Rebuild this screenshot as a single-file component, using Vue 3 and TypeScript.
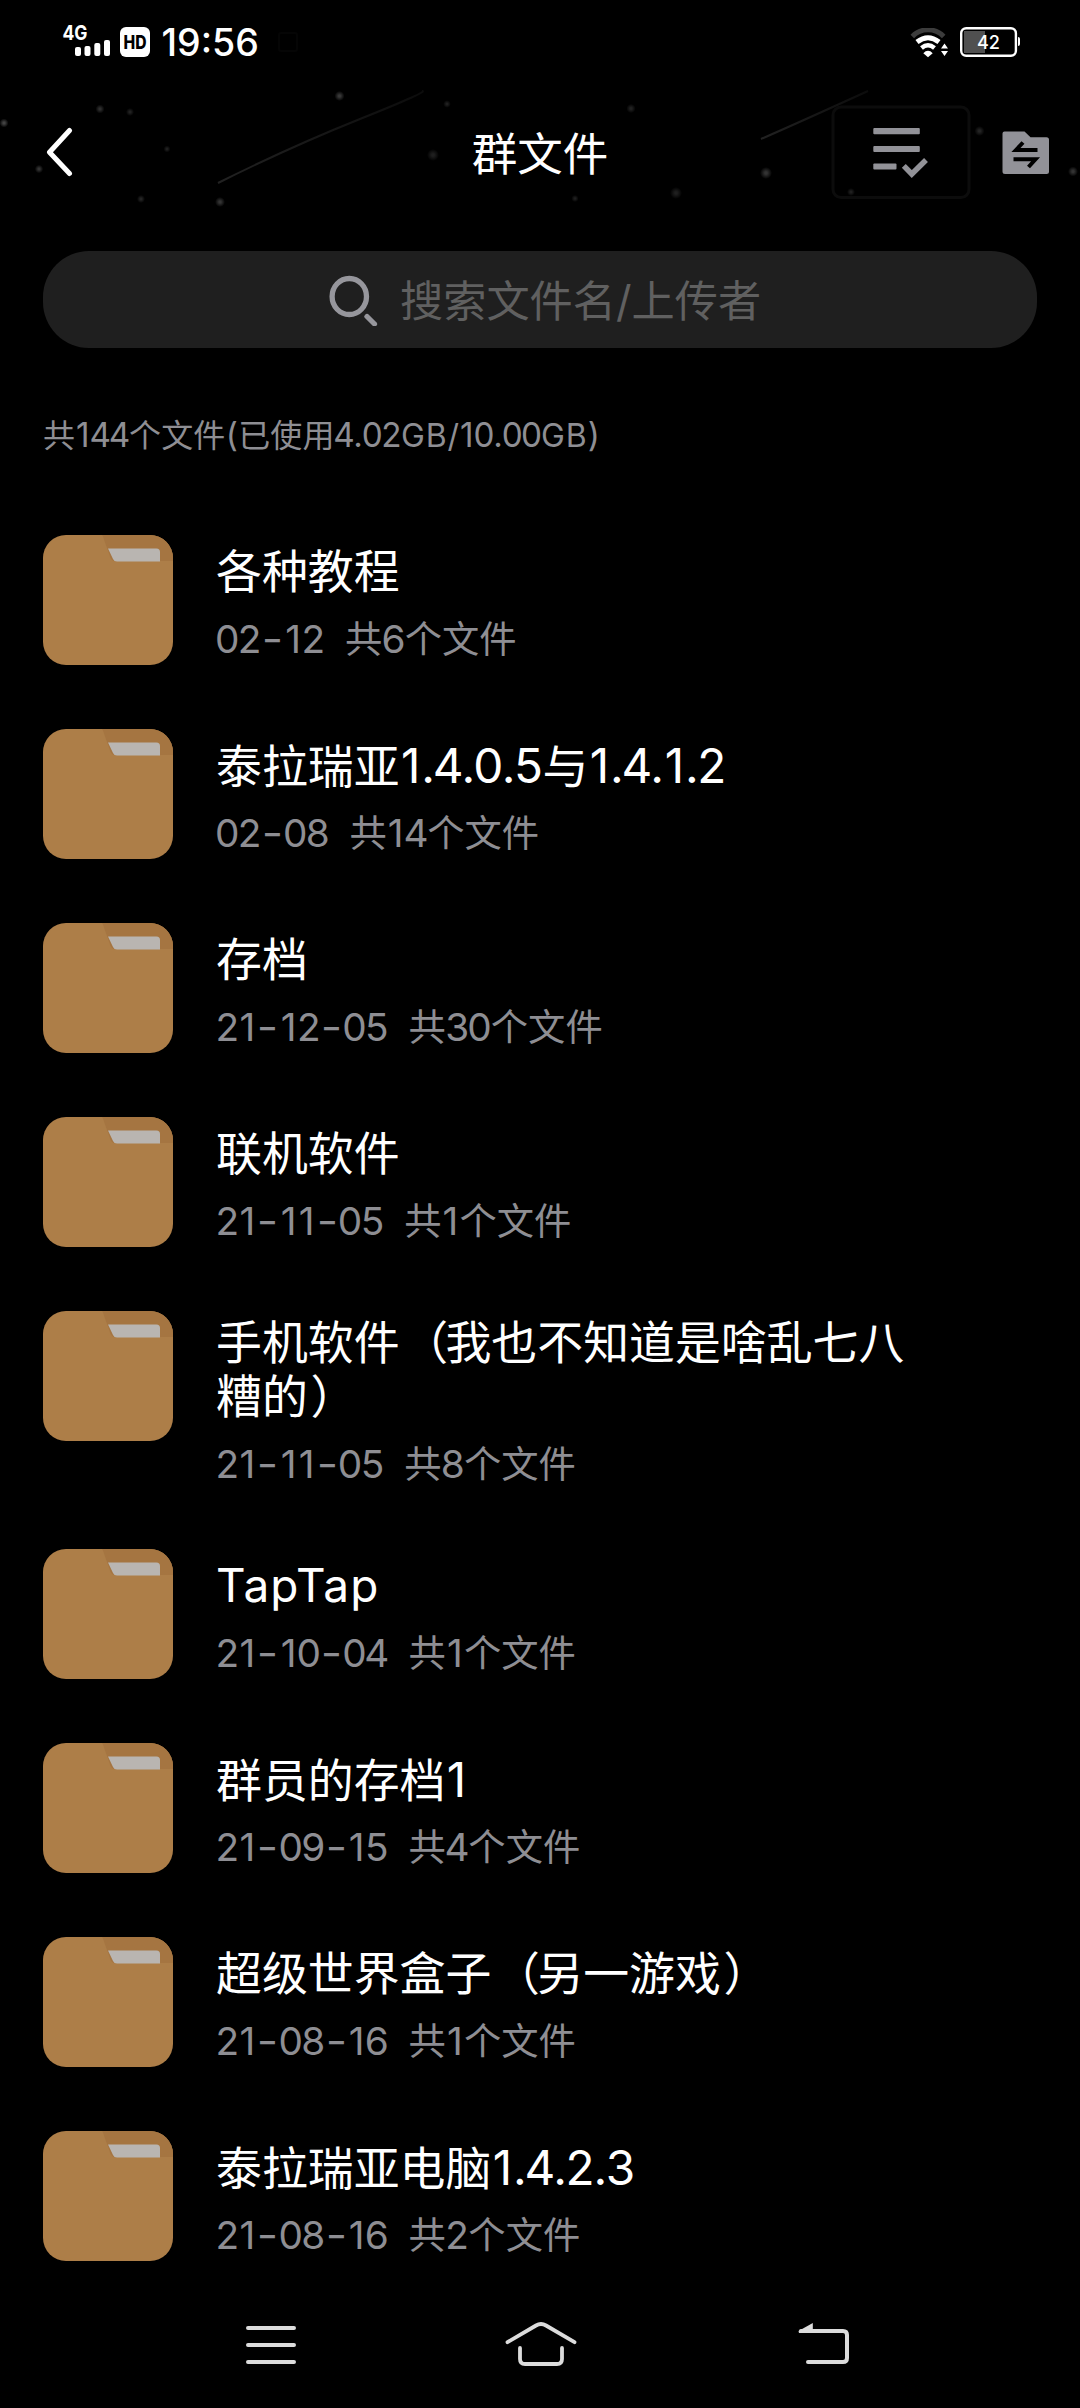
<script setup lang="ts">
import { h } from 'vue'

interface Folder {
  name: string[]
  date: string
  count: number
}

const folders: Folder[] = [
  { name: ['各种教程'], date: '02-12', count: 6 },
  { name: ['泰拉瑞亚1.4.0.5与1.4.1.2'], date: '02-08', count: 14 },
  { name: ['存档'], date: '21-12-05', count: 30 },
  { name: ['联机软件'], date: '21-11-05', count: 1 },
  { name: ['手机软件（我也不知道是啥乱七八', '糟的）'], date: '21-11-05', count: 8 },
  { name: ['TapTap'], date: '21-10-04', count: 1 },
  { name: ['群员的存档1'], date: '21-09-15', count: 4 },
  { name: ['超级世界盒子（另一游戏）'], date: '21-08-16', count: 1 },
  { name: ['泰拉瑞亚电脑1.4.2.3'], date: '21-08-16', count: 2 },
]

// Advance widths, in em, of figures and marks set between the Han characters
function advance(c: string): number | null {
  if (c === '1') return 0.483
  if (/[0-9]/.test(c)) return 0.602
  if (c === '-') return 0.62
  if (c === '.') return 0.275
  if (c === '(' || c === ')') return 0.4
  return null
}

// Figures are set a little larger than the Han text beside them
const FIGURE_SCALE = 1.04

const Figures = (props: { text: string }) =>
  Array.from(props.text).map((c) => {
    const w = advance(c)
    if (w !== null) {
      return h(
        'span',
        {
          style: {
            display: 'inline-flex',
            justifyContent: 'center',
            width: w / FIGURE_SCALE + 'em',
            fontSize: FIGURE_SCALE + 'em',
            transform: c === '-' ? 'scaleX(1.2)' : undefined,
          },
        },
        c,
      )
    }
    if (c === '（' || c === '）') {
      return h('span', { style: { position: 'relative', left: '0.06em' } }, c)
    }
    if (/[A-Za-z]/.test(c)) {
      return h('span', { style: { letterSpacing: '0.024em' } }, c)
    }
    return c
  })
Figures.props = ['text']

// x, y, radius, brightness
const stars: [number, number, number, number][] = [
  [4, 123, 3.5, 0.26], [100, 109, 3.5, 0.18], [130, 112, 3, 0.13], [167, 149, 2.5, 0.12],
  [39, 169, 3.2, 0.2], [141, 199, 3, 0.14], [220, 202, 4, 0.2], [339.5, 96, 4, 0.22],
  [447, 104, 2.8, 0.12], [433, 155, 5, 0.12], [631, 108.5, 3.6, 0.13], [575, 198.5, 2.6, 0.12],
  [676, 193, 5, 0.12], [766, 173, 5, 0.2], [851, 192, 3, 0.12], [979.5, 131, 4, 0.14],
  [1073, 171.5, 4, 0.2],
]
</script>

<template>
  <div class="screen">
    <svg class="sky" width="1080" height="230" viewBox="0 0 1080 230">
      <defs>
        <radialGradient id="star">
          <stop offset="0.2" stop-color="#fff" />
          <stop offset="1" stop-color="#fff" stop-opacity="0" />
        </radialGradient>
        <linearGradient id="trail" x1="0" x2="1">
          <stop offset="0" stop-color="#222" />
          <stop offset="1" stop-color="#0c0c0c" />
        </linearGradient>
      </defs>
      <circle v-for="(s, i) in stars" :key="i" :cx="s[0]" :cy="s[1]" :r="s[2] + 1" :opacity="s[3]" fill="url(#star)" />
      <path d="M218 183Q290 147 360 119T422 91" fill="none" stroke="url(#trail)" stroke-width="2" />
      <path d="M761 139Q800 122 868 91" fill="none" stroke="url(#trail)" stroke-width="2" />
      <rect x="833" y="107" width="136" height="90.500" rx="8" fill="none" stroke="#0c0c0c" stroke-width="3" />
      <rect x="279" y="33" width="18" height="18" rx="2" fill="none" stroke="#050505" stroke-width="2" />
    </svg>

    <div class="status">
      <svg class="signal" width="56" height="40" viewBox="58 20 56 40">
        <text x="62.500" y="39.500" class="net" textLength="25" lengthAdjust="spacingAndGlyphs">4G</text>
        <g fill="#fff">
          <rect x="75" y="47" width="6" height="9" rx="2" />
          <rect x="84.500" y="46" width="6" height="10" rx="2" />
          <rect x="94.300" y="43" width="6" height="13" rx="2" />
          <rect x="104" y="40" width="6" height="16" rx="2" />
        </g>
      </svg>
      <svg class="hd" width="30" height="30" viewBox="0 0 30 30">
        <rect width="30" height="30" rx="6" fill="#fff" />
        <text x="3.500" y="21.800" class="hdt" textLength="23" lengthAdjust="spacingAndGlyphs">HD</text>
      </svg>
      <span class="time">19:56</span>
      <svg class="wifi" width="40" height="30" viewBox="909 28 40 30">
        <g fill="none" stroke="#fff">
          <path d="M912.300 36.400A22 22 0 0 1 943.700 36.400" stroke="#3c3c3c" stroke-width="5" />
          <path d="M917 42Q928 33.500 939 42" stroke-width="5" />
          <path d="M921.500 48Q928 42.500 934.500 48" stroke-width="4.400" />
        </g>
        <path d="M923.300 53.200Q928 48.500 932.700 53.200L928 57.300Z" fill="#fff" />
        <path d="M941 48.500L944.500 43.500L948 48.500ZM941 51L944.500 56L948 51Z" fill="#fff" />
      </svg>
      <svg class="battery" width="61" height="30" viewBox="960 27 61 30">
        <rect x="961.200" y="28.200" width="54.700" height="27.600" rx="5" fill="none" stroke="#fff" stroke-width="2.400" />
        <path d="M964 31h21v22h-21z" fill="#505050" />
        <path d="M1018 37q2 0 2 2v5q0 2-2 2z" fill="#fff" />
        <text x="977" y="49" class="bat" textLength="23" lengthAdjust="spacingAndGlyphs">42</text>
      </svg>
    </div>

    <header class="head">
      <svg class="back" width="30" height="52" viewBox="45 127 30 52">
        <path d="M69.500 130.500L49.500 152.300L69.500 173.500" fill="none" stroke="#fff" stroke-width="5" stroke-linecap="round" stroke-linejoin="round" />
      </svg>
      <h1>群文件</h1>
      <div class="acts">
        <svg width="56" height="52" viewBox="873 126 56 52">
          <g fill="#929298">
            <rect x="873.300" y="127" width="46.500" height="6.300" rx="1" />
            <rect x="873.300" y="145" width="46.500" height="6" rx="1" />
            <rect x="873.300" y="162.500" width="23.200" height="6" rx="1" />
          </g>
          <path d="M903.800 164.800L911.800 173L926 159" fill="none" stroke="#929298" stroke-width="5.500" />
        </svg>
        <svg width="47" height="44" viewBox="1002 132 47 44">
          <path d="M1004.500 132.500H1024.500L1030.500 138.300H1046.500Q1049 138.300 1049 140.800V172.500Q1049 175 1046.500 175H1005Q1002.500 175 1002.500 172.500V134.500Q1002.500 132.500 1004.500 132.500Z" fill="#929298" />
          <path d="M1037.500 151H1016L1023 143.500M1013.500 160.300H1035.500L1028.500 168" fill="none" stroke="#000" stroke-width="4" />
        </svg>
      </div>
    </header>

    <div class="search">
      <svg width="50" height="52" viewBox="328 273 50 52">
        <ellipse cx="349.300" cy="295.500" rx="17.200" ry="18" fill="none" stroke="#96969c" stroke-width="5.300" />
        <path d="M367 315.500L374.500 323" stroke="#96969c" stroke-width="5.200" stroke-linecap="round" />
      </svg>
      <span>搜索文件名/上传者</span>
    </div>

    <p class="summary"><Figures text="共144个文件(已使用4.02GB/10.00GB)" /></p>

    <main class="list">
      <div v-for="f in folders" :key="f.name[0]" class="row" :class="{ tall: f.name.length > 1 }">
        <svg class="folder" width="130" height="130" viewBox="0 0 130 130">
          <path d="M23 0H107A23 23 0 0 1 130 23V107A23 23 0 0 1 107 130H23A23 23 0 0 1 0 107V23A23 23 0 0 1 23 0Z" fill="#ad7e48" />
          <path d="M59 0H107A23 23 0 0 1 130 23V26H72Q68 26 66.500 20L61.500 6Q60 1 59 0Z" fill="#a57541" />
          <path d="M65 13.500H113.500Q117 13.500 117 17V26.500H74Q71 26.500 70 24Z" fill="#b9b5b1" />
        </svg>
        <div class="info">
          <div v-for="line in f.name" :key="line" class="name"><Figures :text="line" /></div>
          <div class="meta">
            <span><Figures :text="f.date" /></span>
            <span><Figures :text="`共${f.count}个文件`" /></span>
          </div>
        </div>
      </div>
    </main>

    <nav class="nav">
      <svg width="50" height="50" viewBox="246 2320 50 50">
        <path d="M248 2328H294M248 2345H294M248 2362H294" stroke="#dcdcdc" stroke-width="4" stroke-linecap="round" />
      </svg>
      <svg class="home" width="72" height="50" viewBox="505 2320 72 50">
        <path d="M507.500 2342.200L536 2325.500Q541 2322.500 546 2325.500L574.500 2342.200M520 2348V2359Q520 2364 525 2364H557Q562 2364 562 2359V2348" fill="none" stroke="#dcdcdc" stroke-width="3.800" stroke-linecap="round" />
      </svg>
      <svg width="54" height="50" viewBox="797 2320 54 50">
        <path d="M801 2331H843Q847 2331 847 2335V2358Q847 2362 843 2362H808" fill="none" stroke="#dcdcdc" stroke-width="4" stroke-linecap="round" />
        <path d="M798.500 2331L812.800 2323V2333H799Z" fill="#dcdcdc" />
      </svg>
    </nav>
  </div>
</template>

<style>
body {
  background: #000;
}
</style>

<style scoped>
.screen {
  position: relative;
  width: 1080px;
  height: 2408px;
  overflow: hidden;
  display: flex;
  flex-direction: column;
  background: #000;
  color: #fff;
  font-family: Inter, "Noto Sans CJK SC", sans-serif;
}
.sky {
  position: absolute;
  left: 0;
  top: 0;
}
.status,
.head {
  position: relative;
  box-sizing: border-box;
  display: flex;
  align-items: center;
}
.status {
  height: 84px;
  padding: 0 59px 0 58px;
}
.signal {
  margin-bottom: 4px;
}
.hd {
  margin-left: 6px;
}
.net {
  font-size: 20px;
  font-weight: 700;
  fill: #fff;
}
.hdt {
  font-size: 18.500px;
  font-weight: 800;
  fill: #000;
}
.bat {
  font-size: 18.500px;
  font-weight: 500;
  fill: #fff;
}
.time {
  margin: 2px 0 0 11.500px;
  font-size: 37.500px;
  font-weight: 500;
  line-height: 44px;
}
.wifi {
  margin: 2px 11px 0 auto;
}
.head {
  height: 138px;
  padding: 0 31px 0 45px;
  justify-content: space-between;
}
h1 {
  position: absolute;
  left: 0;
  right: 0;
  margin: 3px 0 0;
  text-align: center;
  font-size: 45.500px;
  font-weight: 400;
  line-height: 60px;
}
.acts {
  display: flex;
  align-items: center;
  gap: 73px;
}
.search {
  box-sizing: border-box;
  height: 97px;
  margin: 29px 43px 0;
  padding-left: 285px;
  display: flex;
  align-items: center;
  background: #1f1f1f;
  border-radius: 46px;
  color: #606060;
  font-size: 43.200px;
}
.search span {
  margin: 3px 0 0 22px;
  line-height: 60px;
}
.summary {
  height: 44px;
  margin: 65px 43px 0;
  line-height: 44px;
  font-size: 32px;
  letter-spacing: 0.1px;
  color: #8e8e93;
  white-space: nowrap;
}
.list {
  display: flex;
  flex-direction: column;
  gap: 64px;
  margin: 78px 43px 0;
}
.row {
  height: 130px;
  display: flex;
  align-items: flex-start;
  gap: 43px;
}
.tall {
  height: 174px;
}
.folder {
  flex: none;
}
.info {
  padding-top: 9.500px;
}
.tall .info {
  padding-top: 4.500px;
}
.name {
  height: 54px;
  font-size: 45.900px;
  line-height: 54px;
  white-space: nowrap;
}
.meta {
  display: flex;
  gap: 20.500px;
  margin-top: 17.500px;
  font-size: 37.300px;
  line-height: 45px;
  color: #8e8e93;
  white-space: nowrap;
}
.nav {
  position: relative;
  box-sizing: border-box;
  height: 126px;
  margin-top: auto;
  padding-left: 246px;
  display: flex;
  align-items: center;
}
.home {
  margin: 0 220px 0 209px;
}
</style>
